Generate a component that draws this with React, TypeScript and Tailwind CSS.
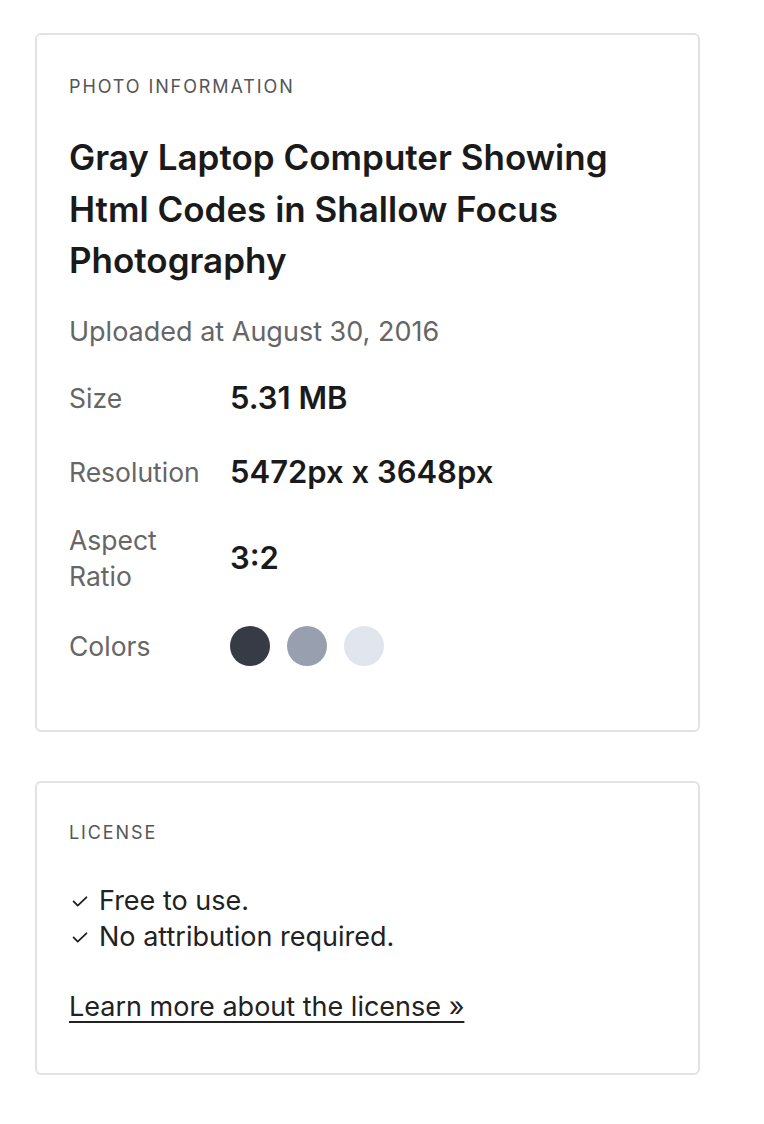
import React from "react";

const font = { fontFamily: "Inter, 'Noto Sans', sans-serif" };

const rows = [
  { label: "Size", value: "5.31 MB" },
  { label: "Resolution", value: "5472px x 3648px" },
  { label: "Aspect Ratio", value: "3:2" },
];

const swatches = ["bg-[#373b46]", "bg-[#98a0b0]", "bg-[#e1e6ee]"];

const Check = () => (
  <svg width="22" height="22" viewBox="0 0 24 24" fill="none" stroke="currentColor" strokeWidth="2" strokeLinecap="round" strokeLinejoin="round" className="mr-2 shrink-0">
    <path d="M5 12.5l4.5 4.5L19 8" />
  </svg>
);

export default function App() {
  return (
    <div className="min-h-screen bg-white pt-[33px] pl-[35px]" style={font}>
      <div className="flex flex-col gap-[49px] w-[665px]">
        <div className="border-2 border-[#e2e2e2] rounded-[6px] px-[32px] pt-[40px] pb-[64px]">
          <p className="text-[18px] tracking-[1.9px] text-[#555] leading-[24px]">PHOTO INFORMATION</p>
          <h1 className="mt-[33px] text-[35px] font-semibold leading-[51.5px] text-[#1a1a1a] pr-6">
            Gray Laptop Computer Showing Html Codes in Shallow Focus Photography
          </h1>
          <p className="mt-[28px] text-[27px] text-[#666] leading-[34px]">Uploaded at August 30, 2016</p>
          <div className="mt-[25px] flex flex-col gap-[26px]">
            {rows.map((r) => (
              <div key={r.label} className="flex items-center">
                <div className="w-[161px] text-[26.5px] leading-[36px] text-[#666] pr-4">
                  {r.label === "Aspect Ratio" ? (
                    <>
                      Aspect
                      <br />
                      Ratio
                    </>
                  ) : (
                    r.label
                  )}
                </div>
                <div className="text-[31px] font-semibold text-[#1a1a1a] leading-[48px]">{r.value}</div>
              </div>
            ))}
            <div className="flex items-center mt-[6px]">
              <div className="w-[161px] text-[26.5px] leading-[36px] text-[#666]">Colors</div>
              <div className="flex gap-[17px]">
                {swatches.map((c) => (
                  <span key={c} className={`w-10 h-10 rounded-full ${c}`} />
                ))}
              </div>
            </div>
          </div>
        </div>

        <div className="border-2 border-[#e2e2e2] rounded-[6px] px-[32px] pt-[38px] pb-[48px]">
          <p className="text-[18px] tracking-[1.9px] text-[#555] leading-[24px]">LICENSE</p>
          <ul className="mt-[38px] text-[27px] leading-[36px] text-[#222]">
            <li className="flex items-center">
              <Check />
              Free to use.
            </li>
            <li className="flex items-center">
              <Check />
              No attribution required.
            </li>
          </ul>
          <a href="#" className="block mt-[34px] text-[27px] leading-[36px] text-[#222] underline underline-offset-[5px]">
            Learn more about the license »
          </a>
        </div>
      </div>
    </div>
  );
}
